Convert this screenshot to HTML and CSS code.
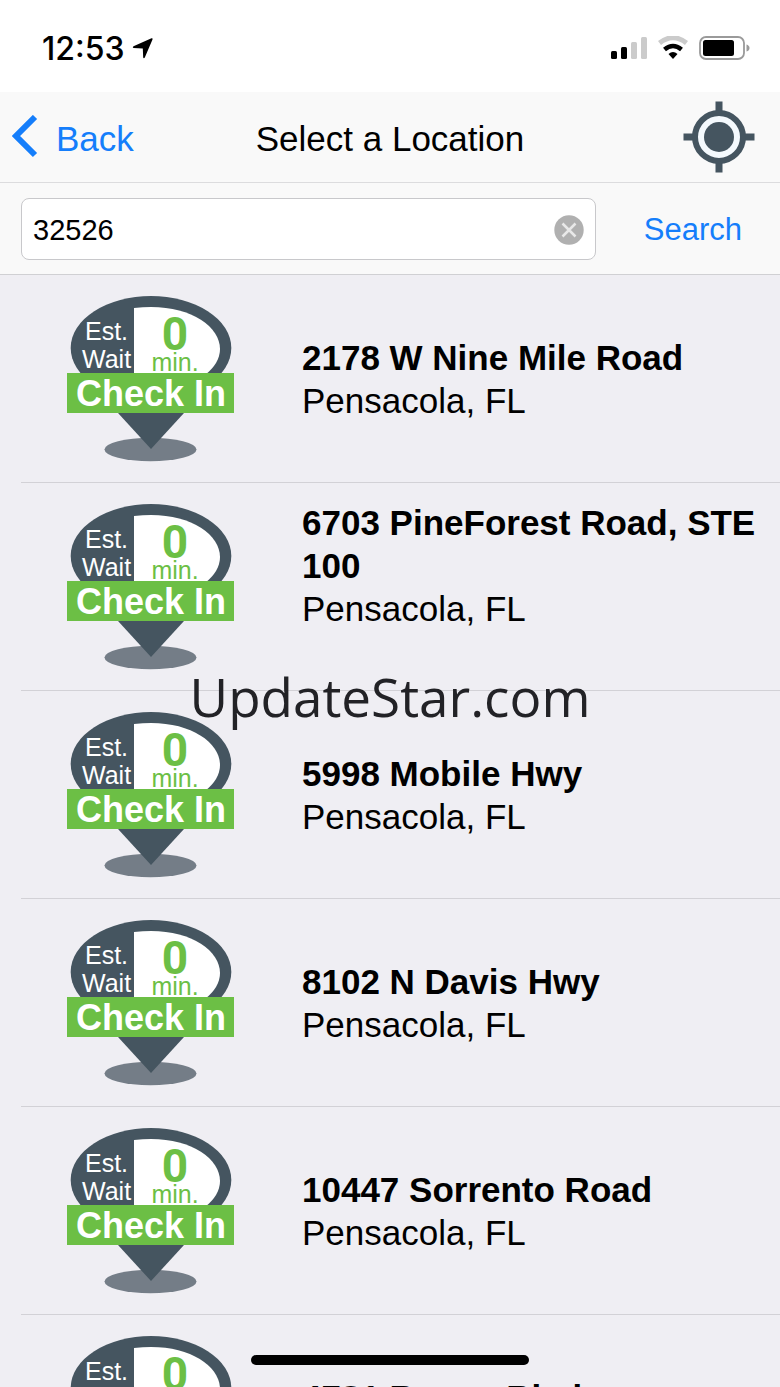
FILE: index.html
```
<!DOCTYPE html>
<html lang="en">
<head>
    <meta charset="utf-8">
    <meta name="viewport" content="width=device-width, initial-scale=1">
    <title>Select a Location</title>
    <link rel="stylesheet" href="styles.css">
</head>
<body>

    <div class="status-bar">
        <div class="clock">
            <span>12:53</span>
            <svg width="21" height="21" viewBox="0 0 21 21"><path d="M19.500 0.300 Q21 0 20.500 1.500 L12.800 19.500 Q11.800 21 11.200 19.500 L10.800 10.500 L1.500 10 Q0 9.500 1.500 8.300 Z"/></svg>
        </div>
        <div class="status-icons">
            <svg width="36" height="24" viewBox="0 0 36 24">
                <rect x="0" y="15" width="6" height="8" rx="1.500"/>
                <rect x="10" y="11" width="6" height="12" rx="1.500"/>
                <rect x="20" y="6" width="6" height="17" rx="1.500" fill="#cbcbcb"/>
                <rect x="30" y="1" width="6" height="22" rx="1.500" fill="#cbcbcb"/>
            </svg>
            <svg width="30" height="24" viewBox="0 0 30 24" fill="none">
                <path d="M1.500 7 Q15 -3.500 28.500 7" stroke="#cbcbcb" stroke-width="5"/>
                <path d="M6.500 13.500 Q15 6.500 23.500 13.500" stroke="#000" stroke-width="4.500"/>
                <path d="M10.500 18 Q15 14 19.500 18 L15 23 Z" fill="#000"/>
            </svg>
            <svg width="51" height="24" viewBox="0 0 51 24">
                <rect x="1" y="1" width="44" height="22" rx="6" fill="none" stroke="#9a9a9a" stroke-width="1.800"/>
                <rect x="4" y="4" width="31" height="16" rx="2.500"/>
                <path d="M47.500 8.500 Q50.500 9.500 50.500 12 Q50.500 14.500 47.500 15.500 Z" fill="#9a9a9a"/>
            </svg>
        </div>
    </div>

    <header class="nav-bar">
        <button class="back-btn" type="button">
            <svg width="26" height="44" viewBox="0 0 26 44"><path d="M23 2 L4 21 L23 40" fill="none" stroke="#157efb" stroke-width="6"/></svg>
            <span>Back</span>
        </button>
        <h1>Select a Location</h1>
        <button class="locate-btn" type="button" aria-label="Use my location">
            <svg width="72" height="72" viewBox="0 0 72 72">
                <path d="M36 0.500 V14 M36 58 V71.500 M0.500 36 H14 M58 36 H71.500" stroke="#455560" stroke-width="7"/>
                <circle cx="36" cy="36" r="24" fill="#f4f9fd" stroke="#455560" stroke-width="6"/>
                <circle cx="36" cy="36" r="15" fill="#455560"/>
            </svg>
        </button>
    </header>

    <form class="search-bar" onsubmit="return false">
        <div class="search-field">
            <input type="text" id="zip" value="32526" aria-label="Zip code">
            <button class="clear-btn" type="button" aria-label="Clear" onclick="clearZip()">
                <svg width="30" height="32" viewBox="0 0 30 32">
                    <circle cx="15" cy="17" r="14.700" fill="#b0b0b0"/>
                    <path d="M8.500 10.500 L21.500 23.500 M21.500 10.500 L8.500 23.500" stroke="#e8e8e8" stroke-width="2.500"/>
                </svg>
            </button>
        </div>
        <button class="search-btn" type="submit">Search</button>
    </form>

    <ul class="locations" id="locations"></ul>

    <div class="watermark">UpdateStar.com</div>
    <div class="home-indicator"></div>

    <script>
        var locations = [
            { street: "2178 W Nine Mile Road", city: "Pensacola, FL", wait: 0 },
            { street: "6703 PineForest Road, STE 100", city: "Pensacola, FL", wait: 0 },
            { street: "5998 Mobile Hwy", city: "Pensacola, FL", wait: 0 },
            { street: "8102 N Davis Hwy", city: "Pensacola, FL", wait: 0 },
            { street: "10447 Sorrento Road", city: "Pensacola, FL", wait: 0 },
            { street: "4781 Bayou Blvd", city: "Pensacola, FL", wait: 0 }
        ];

        // map pin with the wait time and the check in banner
        function pin(wait) {
            return `<svg class="pin" width="168" height="168" viewBox="0 0 168 168">
                <ellipse cx="83.500" cy="154.500" rx="46" ry="11.700" fill="#747d87"/>
                <path d="M51 118 H117 L84 154 Z" fill="#455560"/>
                <ellipse cx="84" cy="53" rx="80.300" ry="52" fill="#455560"/>
                <path d="M67 13 Q76 12 84 12 C125 12 153 32 153 54 Q153 68 138 80 H67 Z" fill="#fff"/>
                <rect x="0" y="78" width="167" height="40" fill="#6cbf45"/>
                <text class="pin-label" x="18" y="45">Est.</text>
                <text class="pin-label" x="15" y="73">Wait</text>
                <text class="pin-wait" x="108" y="55">${wait}</text>
                <text class="pin-unit" x="108" y="76">min.</text>
                <text class="pin-banner" x="84" y="111">Check In</text>
            </svg>`;
        }

        document.getElementById("locations").innerHTML = locations.map(loc => `
            <li class="location">
                <button class="check-in" type="button">${pin(loc.wait)}</button>
                <div class="address">
                    <h2>${loc.street}</h2>
                    <p>${loc.city}</p>
                </div>
            </li>`).join("");

        function clearZip() {
            document.getElementById("zip").value = "";
        }
    </script>

</body>
</html>
```
FILE: styles.css
```
* {
    box-sizing: border-box;
}
body {
    margin: 0;
    height: 100vh;
    display: flex;
    flex-direction: column;
    overflow: hidden;
    position: relative;
    font-family: "Liberation Sans", Helvetica, Arial, sans-serif;
    background-color: #efeef3;
    color: #000;
}
button {
    background: none;
    border: none;
    padding: 0;
    font-family: inherit;
    color: #157efb;
    cursor: pointer;
}
svg {
    display: block;
}
.status-bar {
    flex: none;
    height: 92px;
    padding: 4px 30px 0 42px;
    display: flex;
    justify-content: space-between;
    align-items: center;
    background-color: #fff;
}
.clock {
    display: flex;
    align-items: center;
    gap: 7px;
    font-family: Inter, sans-serif;
    font-size: 32px;
    font-weight: 500;
}
.status-icons {
    display: flex;
    gap: 11px;
}
.nav-bar {
    flex: none;
    height: 91px;
    padding: 0 25px 0 12px;
    display: grid;
    grid-template-columns: 1fr auto 1fr;
    align-items: center;
    background-color: #f9f9f9;
    border-bottom: 1px solid #dcdcde;
}
.nav-bar h1 {
    margin: 0 0 0 13px;
    padding-top: 3px;
    font-size: 35px;
    font-weight: normal;
}
.back-btn {
    display: flex;
    align-items: center;
    gap: 18px;
    font-size: 35px;
}
.back-btn span {
    padding-top: 3px;
}
.locate-btn {
    justify-self: end;
}
.search-bar {
    flex: none;
    height: 92px;
    padding: 0 38px 0 21px;
    display: flex;
    align-items: center;
    gap: 48px;
    background-color: #f9f9f9;
    border-bottom: 1px solid #d0d0d3;
}
.search-field {
    flex: 1;
    height: 62px;
    padding: 0 11px;
    display: flex;
    align-items: center;
    background-color: #fff;
    border: 1px solid #c8c8cb;
    border-radius: 8px;
}
.search-field input {
    flex: 1;
    min-width: 0;
    height: 60px;
    padding: 4px 0 0;
    border: none;
    outline: none;
    background: none;
    font-family: inherit;
    font-size: 29px;
    color: #000;
}
.search-btn {
    padding-top: 3px;
    font-size: 31px;
}
.locations {
    flex: 1;
    min-height: 0;
    margin: 0;
    padding: 0 0 0 21px;
    list-style: none;
    overflow-y: auto;
    scrollbar-width: none;
}
.location {
    min-height: 208px;
    display: flex;
    align-items: flex-end;
    gap: 67px;
    padding: 18px 16px 0 46px;
    border-bottom: 1px solid #d2d1d6;
}
.check-in {
    flex: none;
    margin-bottom: 19px;
}
.address {
    padding-bottom: 60px;
    font-size: 35px;
    line-height: 43px;
}
.address h2 {
    margin: 0;
    font-size: 35px;
}
.address p {
    margin: 0;
}
.pin-label {
    font-size: 25px;
    fill: #fff;
}
.pin-wait {
    font-family: Roboto, sans-serif;
    font-size: 46px;
    font-weight: bold;
    text-anchor: middle;
    fill: #6cbf45;
}
.pin-unit {
    font-size: 25px;
    text-anchor: middle;
    fill: #6cbf45;
}
.pin-banner {
    font-size: 36px;
    font-weight: bold;
    text-anchor: middle;
    fill: #fff;
}
.watermark {
    position: absolute;
    top: 50%;
    left: 0;
    right: 0;
    line-height: 72px;
    margin-top: -33px;
    text-align: center;
    font-family: "Open Sans", "Noto Sans", sans-serif;
    font-size: 53px;
    color: #222226;
    pointer-events: none;
}
.home-indicator {
    position: absolute;
    bottom: 22px;
    left: 50%;
    width: 278px;
    height: 10px;
    margin-left: -139px;
    border-radius: 5px;
    background-color: #000;
}
```
